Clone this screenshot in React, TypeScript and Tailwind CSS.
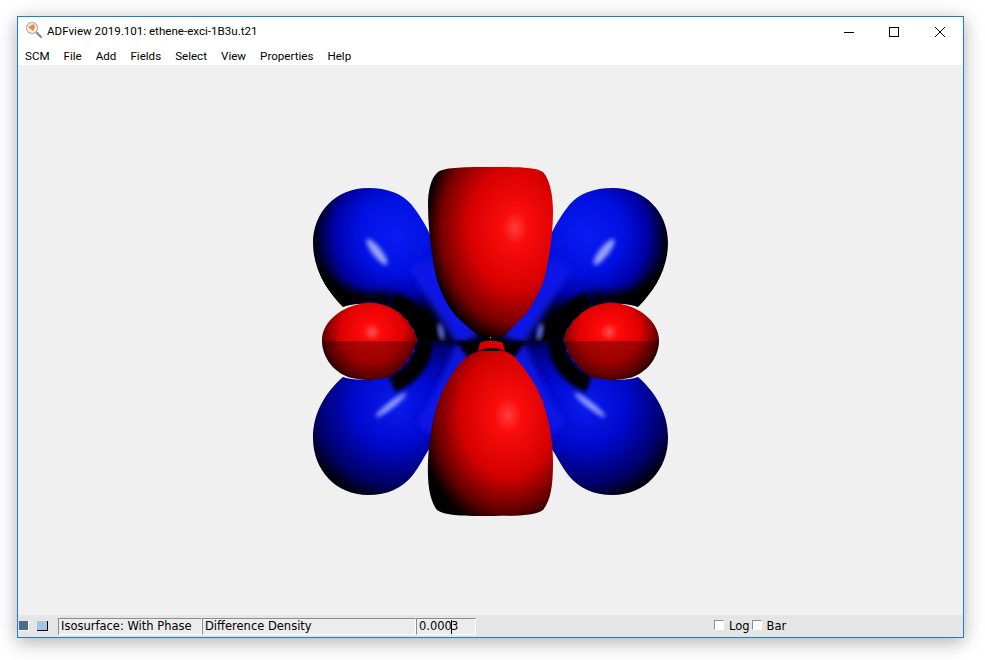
const menus = ["SCM", "File", "Add", "Fields", "Select", "View", "Properties", "Help"];

function AppIcon() {
  return (
    <svg width="18" height="18" viewBox="0 0 18 18" className="shrink-0">
      <line x1="10" y1="10" x2="16" y2="16" stroke="#8a8a8a" strokeWidth="2.4" strokeLinecap="round" />
      <circle cx="7" cy="7" r="5.6" fill="#f4f0ea" stroke="#b5b5b5" strokeWidth="1.2" />
      <path d="M3 6 L9 3 L10 6 L8 10 Z" fill="#f08a2c" />
    </svg>
  );
}

function WindowButtons() {
  return (
    <div className="flex items-center">
      <svg width="46" height="26" viewBox="0 0 46 26">
        <line x1="19" y1="14.5" x2="29" y2="14.5" stroke="#000" />
      </svg>
      <svg width="46" height="26" viewBox="0 0 46 26">
        <rect x="18.5" y="9.5" width="9" height="9" fill="none" stroke="#000" />
      </svg>
      <svg width="46" height="26" viewBox="0 0 46 26">
        <path d="M18 9 L28 19 M28 9 L18 19" stroke="#000" fill="none" />
      </svg>
    </div>
  );
}

function Orbital() {
  const topBlue =
    "M368 188 C388 188 402 194 411 204 C420 215 426 226 432 238 C445 262 470 300 492 341 L395 341 C390 320 380 306 372 304 C358 303 348 305 343 307 C328 292 313 270 313 243 C313 212 336 188 368 188 Z";
  const bottomBlue =
    "M368 495 C388 495 402 488 412 476 C420 466 424 456 432 445 C452 420 476 380 492 341 L395 341 C392 360 382 375 372 379 C362 380 352 380 343 377 C326 392 313 412 313 438 C313 470 336 495 368 495 Z";
  const topRed =
    "M490 167 C515 167 535 167 543 172 C550 180 553 195 553 212 C553 236 549 260 544 280 C538 296 530 310 522 318 C514 326 508 332 503 337 L480 337 C474 332 466 326 458 318 C450 310 442 296 437 280 C432 260 428 230 428 205 C428 190 431 178 438 172 C446 167 466 167 490 167 Z";
  const bottomRed =
    "M480 351 L503 351 C510 352 516 358 522 366 C530 376 538 388 543 403 C549 420 553 440 553 462 C553 485 551 500 543 510 C535 516 515 516 490 516 C466 516 445 516 437 510 C431 502 427 488 428 462 C429 440 432 420 438 403 C443 388 450 376 458 366 C465 358 472 352 480 351 Z";
  const sideRed =
    "M370 303 C392 303 410 318 417 338 C414 356 400 372 388 377 C380 380 374 378 368 381 C362 378 354 380 346 376 C332 370 322 356 322 340 C322 320 346 303 370 303 Z";

  return (
    <svg viewBox="0 0 945 550" className="block h-full w-full">
      <defs>
        <radialGradient id="blueTop" gradientUnits="userSpaceOnUse" cx="395" cy="235" r="86">
          <stop offset="0" stopColor="#0a1cf4" />
          <stop offset="0.45" stopColor="#0010e0" />
          <stop offset="0.72" stopColor="#0000a4" />
          <stop offset="0.93" stopColor="#00001a" />
          <stop offset="1" stopColor="#000" />
        </radialGradient>
        <radialGradient id="blueBottom" gradientUnits="userSpaceOnUse" cx="395" cy="405" r="110">
          <stop offset="0" stopColor="#0a1cf0" />
          <stop offset="0.38" stopColor="#0008cc" />
          <stop offset="0.72" stopColor="#000068" />
          <stop offset="0.88" stopColor="#00000c" />
          <stop offset="1" stopColor="#000" />
        </radialGradient>
        <radialGradient
          id="redTop"
          gradientUnits="userSpaceOnUse"
          cx="515"
          cy="228"
          r="92"
          gradientTransform="translate(515 228) scale(1 1.3) translate(-515 -228)"
        >
          <stop offset="0" stopColor="#ff3c3c" />
          <stop offset="0.14" stopColor="#fa0c0c" />
          <stop offset="0.5" stopColor="#d80000" />
          <stop offset="0.8" stopColor="#780000" />
          <stop offset="0.96" stopColor="#0c0000" />
          <stop offset="1" stopColor="#000" />
        </radialGradient>
        <radialGradient
          id="redBottom"
          gradientUnits="userSpaceOnUse"
          cx="508"
          cy="415"
          r="95"
          gradientTransform="translate(508 415) scale(1 1.3) translate(-508 -415)"
        >
          <stop offset="0" stopColor="#ff3c3c" />
          <stop offset="0.14" stopColor="#fa0c0c" />
          <stop offset="0.5" stopColor="#d40000" />
          <stop offset="0.78" stopColor="#600000" />
          <stop offset="0.93" stopColor="#080000" />
          <stop offset="1" stopColor="#000" />
        </radialGradient>
        <radialGradient id="redSide" gradientUnits="userSpaceOnUse" cx="372" cy="332" r="56">
          <stop offset="0" stopColor="#ff5050" />
          <stop offset="0.16" stopColor="#ff0a0a" />
          <stop offset="0.55" stopColor="#e00000" />
          <stop offset="0.85" stopColor="#700000" />
          <stop offset="1" stopColor="#000" />
        </radialGradient>
        <filter id="soft2" x="-50%" y="-50%" width="200%" height="200%">
          <feGaussianBlur stdDeviation="2" />
        </filter>
        <filter id="soft4" x="-50%" y="-50%" width="200%" height="200%">
          <feGaussianBlur stdDeviation="4" />
        </filter>
        <clipPath id="clipTopBlue">
          <path d={topBlue} />
        </clipPath>
        <clipPath id="clipBottomBlue">
          <path d={bottomBlue} />
        </clipPath>
        <clipPath id="clipSide">
          <path d={sideRed} />
        </clipPath>
        <g id="quarterLeft">
          <path d={topBlue} fill="url(#blueTop)" />
          <g clipPath="url(#clipTopBlue)">
            <path d="M420 262 C432 284 450 310 470 341" stroke="#0714e6" strokeWidth="26" fill="none" filter="url(#soft4)" />
            <path d="M318 272 C330 296 360 304 392 298" stroke="#000" strokeWidth="14" fill="none" filter="url(#soft4)" />
            <path d="M424 341 C424 322 412 308 392 300" stroke="#000" strokeWidth="18" fill="none" filter="url(#soft2)" />
            <ellipse cx="377" cy="252" rx="4.5" ry="16" transform="rotate(-38 377 252)" fill="#9aa4ff" filter="url(#soft2)" />
            <ellipse cx="441" cy="332" rx="2.5" ry="9" transform="rotate(-12 441 332)" fill="#6a78ff" filter="url(#soft2)" />
          </g>
          <path d={bottomBlue} fill="url(#blueBottom)" />
          <g clipPath="url(#clipBottomBlue)">
            <path d="M424 430 C440 410 456 375 470 341" stroke="#0714e6" strokeWidth="24" fill="none" filter="url(#soft4)" />
            <path d="M424 341 C424 360 412 376 392 384" stroke="#000" strokeWidth="18" fill="none" filter="url(#soft2)" />
            <ellipse cx="391" cy="405" rx="3" ry="19" transform="rotate(52 391 405)" fill="#9aa4ff" filter="url(#soft2)" />
          </g>
          <path d="M431 238 C438 262 452 288 470 312" stroke="#5a10a0" strokeWidth="1.5" strokeDasharray="5 8" fill="none" />
          <path d="M437 403 C444 388 452 374 466 356" stroke="#5a10a0" strokeWidth="1.5" strokeDasharray="5 8" fill="none" />
          <path d="M398 312 C410 322 416 332 417 340 C415 352 408 362 396 372" stroke="#3a10c0" strokeWidth="1.5" strokeDasharray="4 7" fill="none" />
          <path d="M362 304 L370 303 L378 304" stroke="#3a10c0" strokeWidth="1.5" fill="none" />
        </g>
      </defs>

      {/* the picture is drawn in page coordinates, the canvas starts at 18,65 */}
      <g transform="translate(-18 -65)">
        <use href="#quarterLeft" />
        <use href="#quarterLeft" transform="translate(981 0) scale(-1 1)" />

        <path d="M456 341 L526 341 L514 358 L468 358 Z" fill="#000" filter="url(#soft2)" />
        <path d={topRed} fill="url(#redTop)" />
        <path d={bottomRed} fill="url(#redBottom)" />
        <path d="M480 343 C484 340 498 340 503 343 L505 351 C497 347 486 347 478 351 Z" fill="#d80000" />

        <path d={sideRed} fill="url(#redSide)" />
        <g transform="translate(981 0) scale(-1 1)">
          <path d={sideRed} fill="url(#redSide)" />
        </g>

        {/* darker part under the cut plane */}
        <g clipPath="url(#clipSide)">
          <rect x="322" y="341" width="96" height="40" fill="#000" opacity="0.3" />
        </g>
        <g transform="translate(981 0) scale(-1 1)" clipPath="url(#clipSide)">
          <rect x="322" y="341" width="96" height="40" fill="#000" opacity="0.3" />
        </g>
        <path d="M417 341 H478 V346 H417 Z M503 341 H564 V346 H503 Z" fill="#000" opacity="0.35" />
      </g>
    </svg>
  );
}

function StatusField({ className, children }: { className: string; children: React.ReactNode }) {
  return (
    <div
      className={`flex h-[17px] items-center truncate border border-t-[#8c8c8c] border-l-[#8c8c8c] border-r-white border-b-white bg-[#ececec] pl-[2px] pt-px ${className}`}
    >
      {children}
    </div>
  );
}

function CheckOption({ label, className }: { label: string; className: string }) {
  return (
    <label className={`flex items-center ${className}`}>
      <span className="mb-[2px] h-[10px] w-[10px] border border-t-[#8c8c8c] border-l-[#8c8c8c] border-r-white border-b-white bg-white" />
      <span className="ml-[5px] pt-px">{label}</span>
    </label>
  );
}

export default function App() {
  return (
    <div className="h-[660px] w-[985px] overflow-hidden bg-white pl-[17px] pt-[16px]">
      <div className="flex h-[622px] w-[947px] flex-col border border-[#1c7fd0] bg-white shadow-[0_4px_18px_rgba(0,0,0,0.32)]">
        <div className="flex h-[27px] shrink-0 items-center justify-between font-['Roboto',sans-serif] text-[11.6px] text-black">
          <div className="flex items-center pl-[7px]">
            <AppIcon />
            <span className="ml-[4px] whitespace-nowrap pt-[2px]">ADFview 2019.101: ethene-exci-1B3u.t21</span>
          </div>
          <WindowButtons />
        </div>
        <div className="flex h-[21px] shrink-0 items-center gap-[14px] pl-[7px] pt-[4px] font-['Roboto',sans-serif] text-[11.6px] text-black">
          {menus.map((m) => (
            <span key={m}>{m}</span>
          ))}
        </div>
        <div className="min-h-0 flex-1 bg-[#f0f0f0]">
          <Orbital />
        </div>
        <div className="flex h-[22px] shrink-0 items-center bg-[#e5e5e5] font-['DejaVu_Sans',sans-serif] text-[11.5px] text-black">
          <span className="ml-[1px] h-[10px] w-[10px] border-r border-b border-r-white border-b-white bg-[#4a6d8f]" />
          <span className="ml-[8px] h-[10px] w-[11px] border-r border-b border-r-black border-b-black bg-[#a6c4e2]" />
          <StatusField className="ml-[10px] w-[144px]">Isosurface: With Phase</StatusField>
          <StatusField className="w-[214px]">Difference Density</StatusField>
          <StatusField className="w-[60px]">
            0.000
            <span className="-mx-px h-[14px] w-px bg-black" />3
          </StatusField>
          <CheckOption label="Log" className="ml-[238px]" />
          <CheckOption label="Bar" className="ml-[2px]" />
        </div>
      </div>
    </div>
  );
}
